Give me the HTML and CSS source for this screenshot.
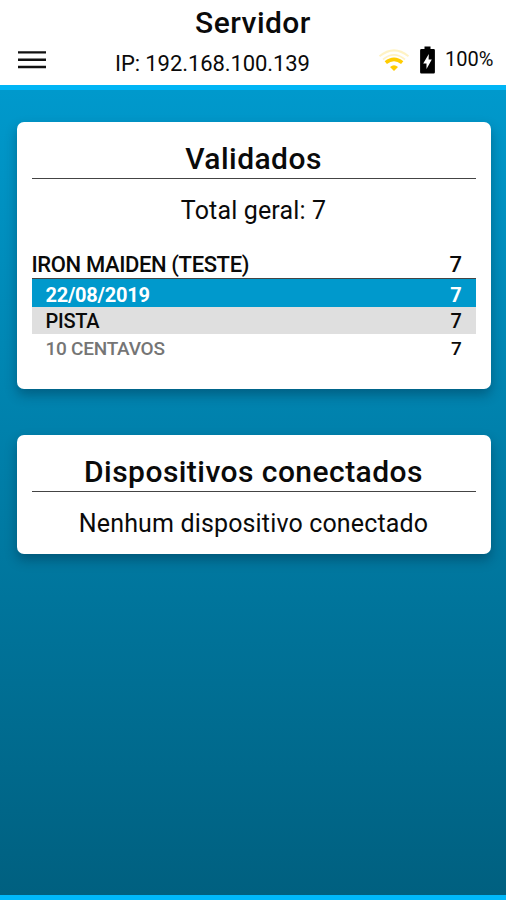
FILE: index.html
```html
<!DOCTYPE html>
<html lang="pt-BR">
<head>
    <meta charset="UTF-8">
    <meta name="viewport" content="width=device-width, initial-scale=1.0">
    <title>Servidor</title>
    <link rel="stylesheet" href="styles.css">
</head>
<body>

    <header class="header">
        <h1 class="header-title">Servidor</h1>
        <div class="header-bar">
            <button class="menu-button" type="button" aria-label="Menu">
                <svg width="28" height="18" viewBox="0 0 28 18">
                    <path d="M0 1.4h28M0 8.7h28M0 16h28" stroke="#111" stroke-width="2.4"/>
                </svg>
            </button>
            <span class="ip">IP: 192.168.100.139</span>
            <div class="status">
                <svg class="wifi" width="32" height="24" viewBox="0 0 32 24">
                    <path d="M1.5 8.2Q16 -3.5 30.5 8.2" fill="none" stroke="#fff3c4" stroke-width="2"/>
                    <path d="M5 11.5Q16 2.2 27 11.5" fill="none" stroke="#fff3c4" stroke-width="1.8"/>
                    <path d="M7.8 14.6Q16 8 24.2 14.6" fill="none" stroke="#fc0" stroke-width="3.6"/>
                    <path d="M12 19Q16 15.6 20 19L16 23z" fill="#fc0"/>
                </svg>
                <svg class="battery" width="15" height="28" viewBox="0 0 15 28">
                    <path d="M4.5 0.5h6v2.5h3.2q1.2 0 1.2 1.2v22q0 1.2-1.2 1.2H1.3Q0.1 27.4 0.1 26.200v-22Q0.1 3 1.3 3h3.200z" fill="#000"/>
                    <path d="M8.800 8L3.200 17.500h3.300v5.500L11.800 13.500H8.600z" fill="#fff"/>
                </svg>
                <span class="battery-level">100%</span>
            </div>
        </div>
    </header>

    <main class="content">
        <section class="card card-validated">
            <h2 class="card-title">Validados</h2>
            <p class="card-text">Total geral: 7</p>
            <ul class="list">
                <li class="row row-event"><span>IRON MAIDEN (TESTE)</span><span>7</span></li>
                <li class="row row-date"><span>22/08/2019</span><span>7</span></li>
                <li class="row row-sector"><span>PISTA</span><span>7</span></li>
                <li class="row row-ticket"><span class="ticket-name">10 CENTAVOS</span><span>7</span></li>
            </ul>
        </section>

        <section class="card card-devices">
            <h2 class="card-title">Dispositivos conectados</h2>
            <p class="card-text">Nenhum dispositivo conectado</p>
        </section>
    </main>

</body>
</html>
```
FILE: styles.css
```css
* {
    box-sizing: border-box;
}
body {
    display: flex;
    flex-direction: column;
    height: 900px;
    margin: 0;
    font-family: Roboto, sans-serif;
    color: #0a0a0a;
    background-color: #fff;
}
h1, h2, p, ul {
    margin: 0;
    padding: 0;
    font-weight: 500;
}
.header {
    height: 85px;
}
.header-title {
    height: 46px;
    font-size: 30px;
    line-height: 45px;
    letter-spacing: 0.45px;
    text-align: center;
}
.header-bar {
    display: grid;
    grid-template-columns: 115px 196px 1fr;
    height: 34px;
}
.menu-button {
    display: flex;
    padding: 5px 0 0 17.5px;
    border: none;
    background: none;
}
.ip {
    font-size: 22px;
    line-height: 35px;
    letter-spacing: -0.08px;
    white-space: nowrap;
}
.status {
    display: flex;
    align-items: flex-start;
    padding-left: 67px;
}
.wifi {
    margin-top: 2px;
}
.battery {
    margin-left: 10px;
}
.battery-level {
    margin-left: 10px;
    font-size: 20px;
    line-height: 27px;
}
.content {
    display: flex;
    flex-direction: column;
    flex: 1;
    gap: 46px;
    padding: 32px 15.5px 0 16.5px;
    border-top: 5px solid #00b5f5;
    border-bottom: 5px solid #00b8fa;
    background: linear-gradient(#0099cc, #006080);
}
.card {
    padding: 15px 15px 0;
    border-radius: 7px;
    background-color: #fff;
    box-shadow: 0 6px 12px rgba(0, 30, 50, 0.35);
}
.card-validated {
    height: 267px;
}
.card-devices {
    height: 119px;
}
.card-title {
    height: 42px;
    border-bottom: 1px solid #444;
    font-size: 30px;
    line-height: 43px;
    letter-spacing: 0.45px;
    text-align: center;
}
.card-text {
    height: 63px;
    font-size: 25px;
    font-weight: 400;
    line-height: 63px;
    letter-spacing: 0.15px;
    text-align: center;
}
.list {
    list-style: none;
}
.row {
    display: flex;
    justify-content: space-between;
    height: 27px;
    padding: 0 14px;
    font-size: 20px;
    font-weight: 500;
    line-height: 29px;
    letter-spacing: -0.25px;
}
.row-event {
    height: 37px;
    padding-left: 0;
    border-bottom: 1px solid #444;
    font-size: 22px;
    line-height: 45px;
    letter-spacing: -0.38px;
}
.row-date {
    height: 28px;
    font-weight: 700;
    line-height: 32px;
    color: #fff;
    background-color: #0099cc;
}
.row-sector {
    background-color: #dfdfdf;
}
.row-ticket {
    font-size: 19px;
}
.ticket-name {
    color: #757575;
}
```
